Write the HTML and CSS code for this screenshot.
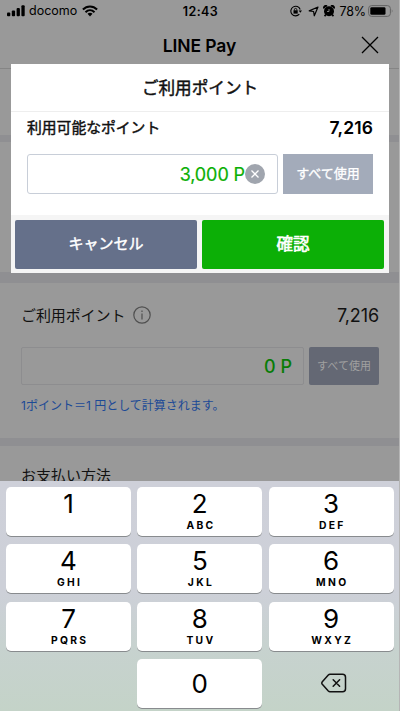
FILE: index.html
```html
<!DOCTYPE html>
<html lang="ja">
<head>
<meta charset="utf-8">
<title>LINE Pay</title>
<link rel="stylesheet" href="styles.css">
</head>
<body>
<div class="screen">
  <div class="status">
    <div class="status-left">
      <svg width="18" height="12" viewBox="0 0 18 12"><rect x="0" y="7.5" width="3.3" height="3.7" rx="1"/><rect x="4.8" y="5.5" width="3.3" height="5.7" rx="1"/><rect x="9.6" y="3" width="3.3" height="8.2" rx="1"/><rect x="14.4" y="0.3" width="3.3" height="10.9" rx="1"/></svg>
      <span class="carrier">docomo</span>
      <svg width="16" height="12" viewBox="0 0 16 12" fill="none" stroke="#000" stroke-width="2"><path d="M.9 4.5C5 .4 11 .4 15.100 4.500M3.500 7.200C6.100 4.700 9.900 4.700 12.500 7.200"/><path d="M5.500 8.800C7 7.500 9 7.500 10.500 8.800L8 11.500z" fill="#000" stroke="none"/></svg>
    </div>
    <span class="clock">12:43</span>
    <div class="status-right">
      <svg width="12" height="12" viewBox="0 0 12 12" fill="none" stroke="#000"><path d="M9.300 9.200A4.800 4.800 0 1 1 10.200 4.500" stroke-width="1.100"/><path d="M8.600 5.400h3.400L10.300 7.800z" fill="#000" stroke="none"/><rect x="3.500" y="5.300" width="4.200" height="3.300" fill="#000" stroke="none"/><path d="M4.400 5.500V4.600a1.200 1.200 0 0 1 2.400 0v.9" stroke-width=".9"/></svg>
      <svg class="locate" width="11" height="11" viewBox="0 0 11 11" fill="none" stroke="#000" stroke-width="1.200" stroke-linejoin="round"><path d="M10 1L6.300 9.800 5.600 5.500 1.200 4.900z"/></svg>
      <svg class="alarm" width="12" height="12" viewBox="0 0 12 12"><circle cx="6" cy="6.300" r="5"/><path d="M1 3.500A2 2 0 0 1 4 1.100M8 1.100a2 2 0 0 1 3 2.400M2.800 9.500L1.600 11.300M9.200 9.500l1.200 1.800" stroke="#000" stroke-width="1.600"/><path d="M6 4v2.500H4" fill="none" stroke="#999" stroke-width=".8"/></svg>
      <span class="percent">78%</span>
      <svg width="26" height="12" viewBox="0 0 26 12"><rect x=".6" y=".6" width="21.800" height="10.800" rx="3" fill="none" stroke="#646464" stroke-width="1"/><rect x="2.300" y="2.200" width="15.200" height="7.600" rx="1.400"/><path d="M23.800 4.200q1.500 1.800 0 3.600z" fill="#646464"/></svg>
    </div>
  </div>
  <header class="header">
    <h1 class="title">LINE Pay</h1>
    <svg class="close" width="18" height="18" viewBox="0 0 18 18" stroke="#000" stroke-width="1.300"><path d="M1 1l16 16M17 1L1 17"/></svg>
  </header>
  <div class="block first"></div>
  <div class="block second"></div>
  <section class="points">
    <div class="points-row">
      <span class="points-label">ご利用ポイント</span>
      <svg class="info" width="18" height="18" viewBox="0 0 18 18" fill="none" stroke="#505050" stroke-width="1.200"><circle cx="9" cy="9" r="8.200"/><path d="M9 7.500v6M9 4.600v1.400"/></svg>
      <span class="points-total">7,216</span>
    </div>
    <div class="points-entry">
      <div class="points-field">0 P</div>
      <div class="points-all">すべて使用</div>
    </div>
    <p class="note">1ポイント＝1 円として計算されます。</p>
  </section>
  <section class="method">お支払い方法</section>

  <div class="modal">
    <h2 class="modal-title">ご利用ポイント</h2>
    <div class="modal-body">
      <div class="available"><span class="available-label">利用可能なポイント</span><span class="available-total">7,216</span></div>
      <div class="entry">
        <div class="field"><span class="amount">3,000 P</span>
          <svg width="20" height="20" viewBox="0 0 20 20"><circle cx="10" cy="10" r="10" fill="#a0a5ae"/><path d="M6.500 6.500l7 7M13.500 6.500l-7 7" stroke="#fff" stroke-width="1.300"/></svg>
        </div>
        <div class="all">すべて使用</div>
      </div>
    </div>
    <div class="actions"><div class="btn cancel">キャンセル</div><div class="btn confirm">確認</div></div>
  </div>

  <div class="keyboard">
    <div class="key"><b>1</b></div>
    <div class="key"><b>2</b><i>ABC</i></div>
    <div class="key"><b>3</b><i>DEF</i></div>
    <div class="key"><b>4</b><i>GHI</i></div>
    <div class="key"><b>5</b><i>JKL</i></div>
    <div class="key"><b>6</b><i>MNO</i></div>
    <div class="key"><b>7</b><i>PQRS</i></div>
    <div class="key"><b>8</b><i>TUV</i></div>
    <div class="key"><b>9</b><i>WXYZ</i></div>
    <div class="blank"></div>
    <div class="key zero"><b>0</b></div>
    <div class="blank"><svg width="26" height="20" viewBox="0 0 26 20" fill="none" stroke="#111" stroke-width="1.500" stroke-linejoin="round" stroke-linecap="round"><path d="M9 1.300h12.500a3 3 0 0 1 3 3v11.400a3 3 0 0 1-3 3H9q-1 0-1.700-.7L1.300 11.300q-1-1.300 0-2.600L7.300 2q.7-.7 1.700-.7zM12.200 6.700l6.400 6.600M18.600 6.700l-6.400 6.600"/></svg></div>
  </div>
</div>
</body>
</html>
```
FILE: styles.css
```css
* { box-sizing: border-box; }
body, h1, h2, p { margin: 0; }
body { background: #999; font-family: Inter, "Noto Sans CJK JP", sans-serif; color: #000; }
svg { display: block; flex: none; }
.screen { position: relative; width: 400px; height: 711px; overflow: hidden; background: #999; border-right: 1px solid #b5b5b5; white-space: nowrap; }

.status { display: grid; grid-template-columns: 1fr auto 1fr; height: 22px; padding: 0 5px 0 7px; align-items: center; }
.status-left, .status-right { display: flex; align-items: center; }
.status-right { justify-content: flex-end; }
.carrier { margin: 0 5px 0 4px; font-size: 12.5px; line-height: 22px; }
.clock { font-size: 12.500px; font-weight: 600; letter-spacing: .4px; }
.locate { margin-left: 6px; }
.alarm { margin-left: 4px; }
.percent { margin: 0 2px 0 4px; font-size: 12.500px; letter-spacing: -.1px; }

.header { display: grid; grid-template-columns: 1fr auto 1fr; align-items: center; height: 47px; border-bottom: 1px solid #858585; padding: 0 20px; }
.title { grid-column: 2; font-size: 17.500px; font-weight: 600; letter-spacing: -.1px; }
.close { justify-self: end; }
.block { border-bottom: 0 solid #8f8f92; }
.first { height: 73px; border-bottom-width: 7px; }
.second { height: 141px; border-bottom-width: 11px; }

.points { height: 163px; padding: 20px 20px 0 21px; border-bottom: 8px solid #8f8f92; }
.points-row { display: flex; align-items: center; height: 24px; }
.points-label { margin-top: -2px; font-size: 15px; letter-spacing: -.1px; color: #111; }
.info { margin-left: 8px; }
.points-total { margin-left: auto; font-size: 18px; letter-spacing: -.1px; color: #111; }
.points-entry { display: flex; gap: 5px; margin-top: 20px; }
.points-field { width: 283px; height: 38px; border: 1px solid #8d8d8f; border-radius: 2px; padding-right: 11px; text-align: right; font-size: 18px; font-weight: 500; line-height: 37px; color: #087c07; }
.points-all { width: 70px; height: 38px; border-radius: 2px; background: #646874; color: #a0a0a0; font-size: 11px; line-height: 38px; text-align: center; }
.note { margin-top: 12px; font-size: 12px; line-height: 18px; color: #1c4a96; }
.method { padding: 18px 21px; font-size: 15px; line-height: 24px; color: #111; }

.modal { position: absolute; left: 11px; top: 64px; width: 378px; height: 209px; background: #fff; }
.modal-title, .available-label, .all, .btn { font-weight: 400; -webkit-text-stroke: .45px currentColor; }
.modal-title { height: 48px; border-bottom: 1px solid #eee; text-align: center; font-size: 16.600px; line-height: 48px; color: #111; }
.modal-body { height: 103px; padding: 3px 16px 0; }
.available { display: flex; justify-content: space-between; align-items: center; height: 24px; }
.available-label { margin-top: -1px; font-size: 14.800px; color: #111; }
.available-total { font-size: 17.500px; font-weight: 600; letter-spacing: .1px; }
.entry { display: flex; gap: 5px; margin-top: 15px; }
.field { display: flex; align-items: center; justify-content: flex-end; width: 251px; height: 40px; border: 1px solid #c8ced8; border-radius: 3px; padding-right: 12px; }
.amount { font-size: 18px; letter-spacing: -.1px; color: #0caf06; -webkit-text-stroke: .2px currentColor; }
.all { width: 90px; height: 40px; background: #a3abba; color: #fff; font-size: 13px; line-height: 39px; text-align: center; -webkit-text-stroke-width: .3px; }
.actions { display: grid; grid-template-columns: 182px 182px; gap: 5px; height: 58px; padding: 5px 4px; background: #f5f5f5; }
.btn { height: 49px; border-radius: 2px; color: #fff; line-height: 48px; text-align: center; }
.cancel { background: #65708a; font-size: 15px; }
.confirm { background: #0caf06; font-size: 16.500px; -webkit-text-stroke-width: .6px; }

.keyboard { position: absolute; left: 0; bottom: 0; width: 399px; height: 230px; display: grid; grid-template-columns: repeat(3, 125px); grid-template-rows: repeat(4, 50px); gap: 7.300px 6.300px; padding: 6px 0 0 6px; background: linear-gradient(#ced0d9 0%, #cdd0d8 48%, #c7d2cf 72%, #c4d3c8 100%); }
.key { display: flex; flex-direction: column; align-items: center; height: 49px; border-radius: 5px; background: #fff; box-shadow: 0 1px 0 #888b8e; }
.key b { margin-top: 1px; font-size: 26px; font-weight: 400; line-height: 32px; }
.key i { margin-top: -1px; font-size: 10.300px; font-style: normal; font-weight: 700; line-height: 12px; letter-spacing: 2.300px; padding-left: 2.300px; }
.zero { justify-content: center; }
.blank { display: flex; align-items: center; justify-content: center; height: 49px; padding-left: 5px; }
```
